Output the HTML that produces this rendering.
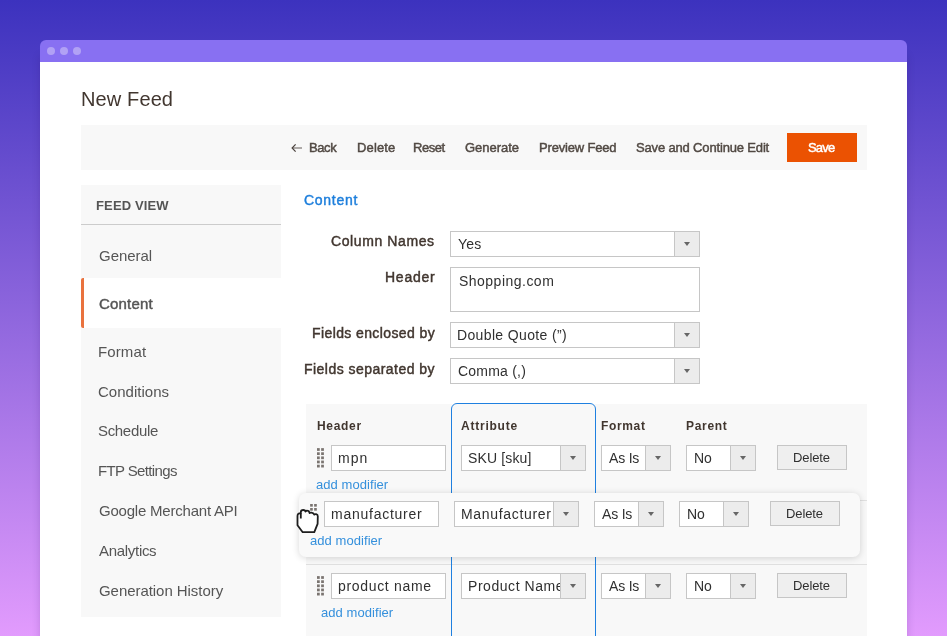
<!DOCTYPE html>
<html><head><meta charset="utf-8"><style>
html,body{margin:0;padding:0;}
body{width:947px;height:636px;overflow:hidden;position:relative;background:linear-gradient(180deg,#3c32be 0%,#e29bfd 100%);font-family:"Liberation Sans", sans-serif;}
.b{position:absolute;}
.t{position:absolute;line-height:1;white-space:nowrap;will-change:transform;}
</style></head><body>
<div class="b" style="left:40px;top:56px;width:867.00px;height:644.00px;background:#fff;box-shadow:0 0 8px rgba(40,0,90,0.18);"></div>
<div class="b" style="left:40px;top:40px;width:867.00px;height:22.00px;background:#8870f2;border-radius:6px 6px 0 0;"></div>
<div class="b" style="left:47px;top:47px;width:8.00px;height:8.00px;background:#b1a1f5;border-radius:50%;"></div>
<div class="b" style="left:60px;top:47px;width:8.00px;height:8.00px;background:#b1a1f5;border-radius:50%;"></div>
<div class="b" style="left:73px;top:47px;width:8.00px;height:8.00px;background:#b1a1f5;border-radius:50%;"></div>
<span class="t" style="left:80.86px;top:88.87px;font-size:20px;font-weight:400;color:#41362f;letter-spacing:0.120px;">New Feed</span>
<div class="b" style="left:81px;top:125px;width:786.00px;height:45.00px;background:#f8f8f8;"></div>
<svg class="b" style="left:290px;top:142px" width="14" height="12" viewBox="0 0 14 12"><path d="M12 6H2.6" fill="none" stroke="#7d7774" stroke-width="1.2"/><path d="M5.6 2.3L2.1 6 5.6 9.7" fill="none" stroke="#4a423d" stroke-width="1.2"/></svg>
<span class="t" style="left:308.56px;top:141.30px;font-size:13px;font-weight:400;color:#514943;letter-spacing:-0.417px;-webkit-text-stroke:0.45px #514943;">Back</span>
<span class="t" style="left:356.76px;top:141.30px;font-size:13px;font-weight:400;color:#514943;letter-spacing:0.129px;-webkit-text-stroke:0.45px #514943;">Delete</span>
<span class="t" style="left:413.46px;top:141.30px;font-size:13px;font-weight:400;color:#514943;letter-spacing:-0.491px;-webkit-text-stroke:0.45px #514943;">Reset</span>
<span class="t" style="left:465.20px;top:141.30px;font-size:13px;font-weight:400;color:#514943;letter-spacing:-0.029px;-webkit-text-stroke:0.45px #514943;">Generate</span>
<span class="t" style="left:539.46px;top:141.30px;font-size:13px;font-weight:400;color:#514943;letter-spacing:-0.178px;-webkit-text-stroke:0.45px #514943;">Preview Feed</span>
<span class="t" style="left:636.39px;top:141.30px;font-size:13px;font-weight:400;color:#514943;letter-spacing:-0.161px;-webkit-text-stroke:0.45px #514943;">Save and Continue Edit</span>
<div class="b" style="left:787px;top:133px;width:70.00px;height:28.50px;background:#eb5202;"></div>
<span class="t" style="left:807.99px;top:141.30px;font-size:13px;font-weight:400;color:#fff;letter-spacing:-0.800px;-webkit-text-stroke:0.45px #fff;">Save</span>
<div class="b" style="left:81px;top:185px;width:200.00px;height:432.00px;background:#f8f8f8;"></div>
<div class="b" style="left:81px;top:224px;width:200.00px;height:1.00px;background:#cccccc;"></div>
<span class="t" style="left:95.73px;top:198.70px;font-size:13px;font-weight:700;color:#555;letter-spacing:0.138px;">FEED VIEW</span>
<div class="b" style="left:81px;top:278px;width:200.00px;height:50.00px;background:#fff;"></div>
<div class="b" style="left:81px;top:278px;width:3.00px;height:50.00px;background:#e9723e;border-radius:2px 0 0 2px;"></div>
<span class="t" style="left:98.50px;top:247.50px;font-size:15px;font-weight:400;color:#555;letter-spacing:-0.037px;">General</span>
<span class="t" style="left:98.82px;top:296.00px;font-size:15px;font-weight:400;color:#555;letter-spacing:0.196px;-webkit-text-stroke:0.45px #555;">Content</span>
<span class="t" style="left:98.30px;top:343.80px;font-size:15px;font-weight:400;color:#555;letter-spacing:0.110px;">Format</span>
<span class="t" style="left:98.49px;top:383.70px;font-size:15px;font-weight:400;color:#555;letter-spacing:0.012px;">Conditions</span>
<span class="t" style="left:98.40px;top:423.40px;font-size:15px;font-weight:400;color:#555;letter-spacing:-0.328px;">Schedule</span>
<span class="t" style="left:98.30px;top:463.30px;font-size:15px;font-weight:400;color:#555;letter-spacing:-0.636px;">FTP Settings</span>
<span class="t" style="left:98.50px;top:503.30px;font-size:15px;font-weight:400;color:#555;letter-spacing:-0.215px;">Google Merchant API</span>
<span class="t" style="left:99.30px;top:543.30px;font-size:15px;font-weight:400;color:#555;letter-spacing:-0.300px;">Analytics</span>
<span class="t" style="left:98.50px;top:583.30px;font-size:15px;font-weight:400;color:#555;letter-spacing:-0.053px;">Generation History</span>
<span class="t" style="left:304.18px;top:193.45px;font-size:14px;font-weight:400;color:#1e7fdc;letter-spacing:0.725px;-webkit-text-stroke:0.45px #1e7fdc;">Content</span>
<span class="t" style="left:331.08px;top:234.45px;font-size:14px;font-weight:400;color:#41362f;letter-spacing:0.603px;-webkit-text-stroke:0.45px #41362f;">Column Names</span>
<span class="t" style="left:384.57px;top:270.35px;font-size:14px;font-weight:400;color:#41362f;letter-spacing:0.747px;-webkit-text-stroke:0.45px #41362f;">Header</span>
<span class="t" style="left:311.57px;top:326.15px;font-size:14px;font-weight:400;color:#41362f;letter-spacing:0.393px;-webkit-text-stroke:0.45px #41362f;">Fields enclosed by</span>
<span class="t" style="left:303.67px;top:362.35px;font-size:14px;font-weight:400;color:#41362f;letter-spacing:0.463px;-webkit-text-stroke:0.45px #41362f;">Fields separated by</span>
<div class="b" style="left:450px;top:231px;width:250.00px;height:26.00px;background:#fff;border:1px solid #c6c6c6;box-sizing:border-box;"></div>
<span class="t" style="left:457.56px;top:237.35px;font-size:14px;font-weight:400;color:#303030;letter-spacing:0.216px;">Yes</span>
<div class="b" style="left:674px;top:231px;width:26.00px;height:26.00px;background:#ececec;border:1px solid #c6c6c6;box-sizing:border-box;"></div>
<div class="b" style="left:684.0px;top:242.0px;width:0;height:0;border-left:3px solid transparent;border-right:3px solid transparent;border-top:4px solid #666;"></div>
<div class="b" style="left:450px;top:267px;width:250.00px;height:45.00px;background:#fff;border:1px solid #c6c6c6;box-sizing:border-box;"></div>
<span class="t" style="left:459.13px;top:274.45px;font-size:14px;font-weight:400;color:#303030;letter-spacing:0.481px;">Shopping.com</span>
<div class="b" style="left:450px;top:322px;width:250.00px;height:26.00px;background:#fff;border:1px solid #c6c6c6;box-sizing:border-box;"></div>
<span class="t" style="left:457.40px;top:328.15px;font-size:14px;font-weight:400;color:#303030;letter-spacing:0.356px;">Double Quote (&#8221;)</span>
<div class="b" style="left:674px;top:322px;width:26.00px;height:26.00px;background:#ececec;border:1px solid #c6c6c6;box-sizing:border-box;"></div>
<div class="b" style="left:684.0px;top:333.0px;width:0;height:0;border-left:3px solid transparent;border-right:3px solid transparent;border-top:4px solid #666;"></div>
<div class="b" style="left:450px;top:358px;width:250.00px;height:26.00px;background:#fff;border:1px solid #c6c6c6;box-sizing:border-box;"></div>
<span class="t" style="left:457.64px;top:363.95px;font-size:14px;font-weight:400;color:#303030;letter-spacing:0.213px;">Comma (,)</span>
<div class="b" style="left:674px;top:358px;width:26.00px;height:26.00px;background:#ececec;border:1px solid #c6c6c6;box-sizing:border-box;"></div>
<div class="b" style="left:684.0px;top:369.0px;width:0;height:0;border-left:3px solid transparent;border-right:3px solid transparent;border-top:4px solid #666;"></div>
<div class="b" style="left:306px;top:404px;width:561.00px;height:296.00px;background:#f8f8f8;"></div>
<div class="b" style="left:306px;top:500px;width:561.00px;height:1.00px;background:#e0e0e0;"></div>
<div class="b" style="left:306px;top:564px;width:561.00px;height:1.00px;background:#e0e0e0;"></div>
<div class="b" style="left:451px;top:403px;width:145.00px;height:297.00px;border:1px solid #1f80e0;border-radius:6px 6px 0 0;box-sizing:border-box;"></div>
<span class="t" style="left:316.60px;top:419.84px;font-size:12px;font-weight:700;color:#41362f;letter-spacing:0.684px;">Header</span>
<span class="t" style="left:460.73px;top:419.84px;font-size:12px;font-weight:700;color:#41362f;letter-spacing:0.768px;">Attribute</span>
<span class="t" style="left:600.60px;top:419.84px;font-size:12px;font-weight:700;color:#41362f;letter-spacing:0.655px;">Format</span>
<span class="t" style="left:685.70px;top:419.84px;font-size:12px;font-weight:700;color:#41362f;letter-spacing:0.685px;">Parent</span>
<svg class="b" style="left:317px;top:448px" width="8" height="22" viewBox="0 0 8 21.75"><g fill="#7a7470"><rect x="0.00" y="0.00" width="2.75" height="2.75"/><rect x="4.15" y="0.00" width="2.75" height="2.75"/><rect x="0.00" y="4.15" width="2.75" height="2.75"/><rect x="4.15" y="4.15" width="2.75" height="2.75"/><rect x="0.00" y="8.30" width="2.75" height="2.75"/><rect x="4.15" y="8.30" width="2.75" height="2.75"/><rect x="0.00" y="12.45" width="2.75" height="2.75"/><rect x="4.15" y="12.45" width="2.75" height="2.75"/><rect x="0.00" y="16.60" width="2.75" height="2.75"/><rect x="4.15" y="16.60" width="2.75" height="2.75"/></g></svg>
<div class="b" style="left:331px;top:445px;width:115.00px;height:26.00px;background:#fff;border:1px solid #c6c6c6;box-sizing:border-box;"></div>
<span class="t" style="left:338.44px;top:451.25px;font-size:14px;font-weight:400;color:#303030;letter-spacing:1.044px;">mpn</span>
<div class="b" style="left:461px;top:445px;width:125.00px;height:26.00px;background:#fff;border:1px solid #c6c6c6;box-sizing:border-box;"></div>
<span class="t" style="left:468.43px;top:451.25px;font-size:14px;font-weight:400;color:#303030;letter-spacing:0.141px;">SKU [sku]</span>
<div class="b" style="left:560px;top:445px;width:26.00px;height:26.00px;background:#ececec;border:1px solid #c6c6c6;box-sizing:border-box;"></div>
<div class="b" style="left:570.0px;top:456.0px;width:0;height:0;border-left:3px solid transparent;border-right:3px solid transparent;border-top:4px solid #666;"></div>
<div class="b" style="left:601px;top:445px;width:70.00px;height:26.00px;background:#fff;border:1px solid #c6c6c6;box-sizing:border-box;"></div>
<span class="t" style="left:608.90px;top:451.25px;font-size:14px;font-weight:400;color:#303030;letter-spacing:-0.188px;">As Is</span>
<div class="b" style="left:645px;top:445px;width:26.00px;height:26.00px;background:#ececec;border:1px solid #c6c6c6;box-sizing:border-box;"></div>
<div class="b" style="left:655.0px;top:456.0px;width:0;height:0;border-left:3px solid transparent;border-right:3px solid transparent;border-top:4px solid #666;"></div>
<div class="b" style="left:686px;top:445px;width:70.00px;height:26.00px;background:#fff;border:1px solid #c6c6c6;box-sizing:border-box;"></div>
<span class="t" style="left:694.30px;top:451.25px;font-size:14px;font-weight:400;color:#303030;letter-spacing:0.000px;">No</span>
<div class="b" style="left:730px;top:445px;width:26.00px;height:26.00px;background:#ececec;border:1px solid #c6c6c6;box-sizing:border-box;"></div>
<div class="b" style="left:740.0px;top:456.0px;width:0;height:0;border-left:3px solid transparent;border-right:3px solid transparent;border-top:4px solid #666;"></div>
<div class="b" style="left:777px;top:445px;width:70.00px;height:25.00px;background:#efefef;border:1px solid #c6c6c6;box-sizing:border-box;"></div>
<span class="t" style="left:793.20px;top:451.00px;font-size:13px;font-weight:400;color:#303030;letter-spacing:-0.120px;">Delete</span>
<span class="t" style="left:316.49px;top:477.70px;font-size:13px;font-weight:400;color:#3590dc;letter-spacing:0.060px;">add modifier</span>
<div class="b" style="left:299px;top:493px;width:561.00px;height:64.00px;background:#f9f9f9;border-radius:7px;box-shadow:0 1px 7px rgba(0,0,0,0.16);"></div>
<div class="b" style="left:324px;top:501px;width:115.00px;height:26.00px;background:#fff;border:1px solid #c6c6c6;box-sizing:border-box;"></div>
<span class="t" style="left:331.44px;top:507.25px;font-size:14px;font-weight:400;color:#303030;letter-spacing:0.743px;">manufacturer</span>
<div class="b" style="left:454px;top:501px;width:125.00px;height:26.00px;background:#fff;border:1px solid #c6c6c6;box-sizing:border-box;"></div>
<span class="t" style="left:461.30px;top:507.25px;font-size:14px;font-weight:400;color:#303030;letter-spacing:0.674px;">Manufacturer</span>
<div class="b" style="left:553px;top:501px;width:26.00px;height:26.00px;background:#ececec;border:1px solid #c6c6c6;box-sizing:border-box;"></div>
<div class="b" style="left:563.0px;top:512.0px;width:0;height:0;border-left:3px solid transparent;border-right:3px solid transparent;border-top:4px solid #666;"></div>
<div class="b" style="left:594px;top:501px;width:70.00px;height:26.00px;background:#fff;border:1px solid #c6c6c6;box-sizing:border-box;"></div>
<span class="t" style="left:601.90px;top:507.25px;font-size:14px;font-weight:400;color:#303030;letter-spacing:-0.188px;">As Is</span>
<div class="b" style="left:638px;top:501px;width:26.00px;height:26.00px;background:#ececec;border:1px solid #c6c6c6;box-sizing:border-box;"></div>
<div class="b" style="left:648.0px;top:512.0px;width:0;height:0;border-left:3px solid transparent;border-right:3px solid transparent;border-top:4px solid #666;"></div>
<div class="b" style="left:679px;top:501px;width:70.00px;height:26.00px;background:#fff;border:1px solid #c6c6c6;box-sizing:border-box;"></div>
<span class="t" style="left:687.30px;top:507.25px;font-size:14px;font-weight:400;color:#303030;letter-spacing:0.000px;">No</span>
<div class="b" style="left:723px;top:501px;width:26.00px;height:26.00px;background:#ececec;border:1px solid #c6c6c6;box-sizing:border-box;"></div>
<div class="b" style="left:733.0px;top:512.0px;width:0;height:0;border-left:3px solid transparent;border-right:3px solid transparent;border-top:4px solid #666;"></div>
<div class="b" style="left:770px;top:501px;width:70.00px;height:25.00px;background:#efefef;border:1px solid #c6c6c6;box-sizing:border-box;"></div>
<span class="t" style="left:786.20px;top:507.00px;font-size:13px;font-weight:400;color:#303030;letter-spacing:-0.120px;">Delete</span>
<span class="t" style="left:309.69px;top:533.90px;font-size:13px;font-weight:400;color:#3590dc;letter-spacing:0.060px;">add modifier</span>
<svg class="b" style="left:310px;top:504px" width="8" height="9" viewBox="0 0 8 9.30"><g fill="#7a7470"><rect x="0.00" y="0.00" width="2.75" height="2.75"/><rect x="4.15" y="0.00" width="2.75" height="2.75"/><rect x="0.00" y="4.15" width="2.75" height="2.75"/><rect x="4.15" y="4.15" width="2.75" height="2.75"/></g></svg>
<svg class="b" style="left:317px;top:576px" width="8" height="22" viewBox="0 0 8 21.75"><g fill="#7a7470"><rect x="0.00" y="0.00" width="2.75" height="2.75"/><rect x="4.15" y="0.00" width="2.75" height="2.75"/><rect x="0.00" y="4.15" width="2.75" height="2.75"/><rect x="4.15" y="4.15" width="2.75" height="2.75"/><rect x="0.00" y="8.30" width="2.75" height="2.75"/><rect x="4.15" y="8.30" width="2.75" height="2.75"/><rect x="0.00" y="12.45" width="2.75" height="2.75"/><rect x="4.15" y="12.45" width="2.75" height="2.75"/><rect x="0.00" y="16.60" width="2.75" height="2.75"/><rect x="4.15" y="16.60" width="2.75" height="2.75"/></g></svg>
<div class="b" style="left:331px;top:573px;width:115.00px;height:26.00px;background:#fff;border:1px solid #c6c6c6;box-sizing:border-box;"></div>
<span class="t" style="left:338.47px;top:579.25px;font-size:14px;font-weight:400;color:#303030;letter-spacing:0.675px;">product name</span>
<div class="b" style="left:461px;top:573px;width:125.00px;height:26.00px;background:#fff;border:1px solid #c6c6c6;box-sizing:border-box;"></div>
<span class="t" style="left:468.30px;top:579.25px;font-size:14px;font-weight:400;color:#303030;letter-spacing:0.545px;">Product Name</span>
<div class="b" style="left:560px;top:573px;width:26.00px;height:26.00px;background:#ececec;border:1px solid #c6c6c6;box-sizing:border-box;"></div>
<div class="b" style="left:570.0px;top:584.0px;width:0;height:0;border-left:3px solid transparent;border-right:3px solid transparent;border-top:4px solid #666;"></div>
<div class="b" style="left:601px;top:573px;width:70.00px;height:26.00px;background:#fff;border:1px solid #c6c6c6;box-sizing:border-box;"></div>
<span class="t" style="left:608.90px;top:579.25px;font-size:14px;font-weight:400;color:#303030;letter-spacing:-0.188px;">As Is</span>
<div class="b" style="left:645px;top:573px;width:26.00px;height:26.00px;background:#ececec;border:1px solid #c6c6c6;box-sizing:border-box;"></div>
<div class="b" style="left:655.0px;top:584.0px;width:0;height:0;border-left:3px solid transparent;border-right:3px solid transparent;border-top:4px solid #666;"></div>
<div class="b" style="left:686px;top:573px;width:70.00px;height:26.00px;background:#fff;border:1px solid #c6c6c6;box-sizing:border-box;"></div>
<span class="t" style="left:694.30px;top:579.25px;font-size:14px;font-weight:400;color:#303030;letter-spacing:0.000px;">No</span>
<div class="b" style="left:730px;top:573px;width:26.00px;height:26.00px;background:#ececec;border:1px solid #c6c6c6;box-sizing:border-box;"></div>
<div class="b" style="left:740.0px;top:584.0px;width:0;height:0;border-left:3px solid transparent;border-right:3px solid transparent;border-top:4px solid #666;"></div>
<div class="b" style="left:777px;top:573px;width:70.00px;height:25.00px;background:#efefef;border:1px solid #c6c6c6;box-sizing:border-box;"></div>
<span class="t" style="left:793.20px;top:579.00px;font-size:13px;font-weight:400;color:#303030;letter-spacing:-0.120px;">Delete</span>
<span class="t" style="left:320.59px;top:605.50px;font-size:13px;font-weight:400;color:#3590dc;letter-spacing:0.060px;">add modifier</span>
<svg class="b" style="left:294px;top:506px" width="28" height="30" viewBox="0 0 28 30"><path d="M8.7 26.2 L3.5 19.3 L3.5 10 C3.5 8 4.8 7.1 6.8 7.1 L6.8 6.2 C6.8 4.8 8 4 9.4 4 C10.6 4 11.3 4.8 11.5 5.6 C12 4.8 12.6 4.6 13.4 4.7 C14.6 4.8 15.4 5.8 15.6 7 C16 6.6 16.6 6.5 17.4 6.6 C18.8 6.8 19.8 7.6 20.3 8.6 C20.8 8.1 21.5 8 22.2 8.1 C23.2 8.3 23.8 9.2 23.8 10.2 L23.6 17.9 L20.3 26.2 Z" fill="#fff" stroke="#1e1e1e" stroke-width="1.8" stroke-linejoin="round"/><path d="M6.8 7.1 L6.8 12.5" stroke="#1e1e1e" stroke-width="1.8" stroke-linecap="butt"/></svg>
</body></html>
